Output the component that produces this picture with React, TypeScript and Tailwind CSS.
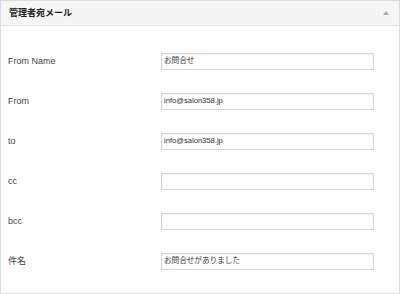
import React from "react";

const rows: { label: string; value: string }[] = [
  { label: "From Name", value: "お問合せ" },
  { label: "From", value: "info@salon358.jp" },
  { label: "to", value: "info@salon358.jp" },
  { label: "cc", value: "" },
  { label: "bcc", value: "" },
  { label: "件名", value: "お問合せがありました" },
];

export default function App() {
  return (
    <div
      className="w-[400px] h-[294px] bg-white border border-[#dcdcdc] flex flex-col text-[#333]"
      style={{ fontFamily: '"Liberation Sans", Arial, "Noto Sans CJK JP", sans-serif' }}
    >
      <div className="h-[25px] shrink-0 bg-[#f5f5f5] border-b border-[#e5e5e5] flex items-center justify-between pl-[8px] pr-[10px]">
        <span className="text-[9px] font-bold text-[#222] leading-none">管理者宛メール</span>
        <svg width="6" height="4" viewBox="0 0 6 4" className="mb-[1px]">
          <polygon points="3,0 6,4 0,4" fill="#a8a8a8" />
        </svg>
      </div>
      <div className="flex flex-col pt-[15px]">
        {rows.map((r) => (
          <div key={r.label} className="h-[40px] flex items-center pl-[7px]">
            <div className="w-[153px] text-[9px] text-[#444] leading-none">{r.label}</div>
            <div className="w-[213px] h-[17px] border border-[#d3d6df] shadow-[inset_0_1px_2px_rgba(0,0,0,0.07)] bg-white flex items-center px-[2px] text-[7.6px] text-[#333] leading-none">
              {r.value}
            </div>
          </div>
        ))}
      </div>
    </div>
  );
}
